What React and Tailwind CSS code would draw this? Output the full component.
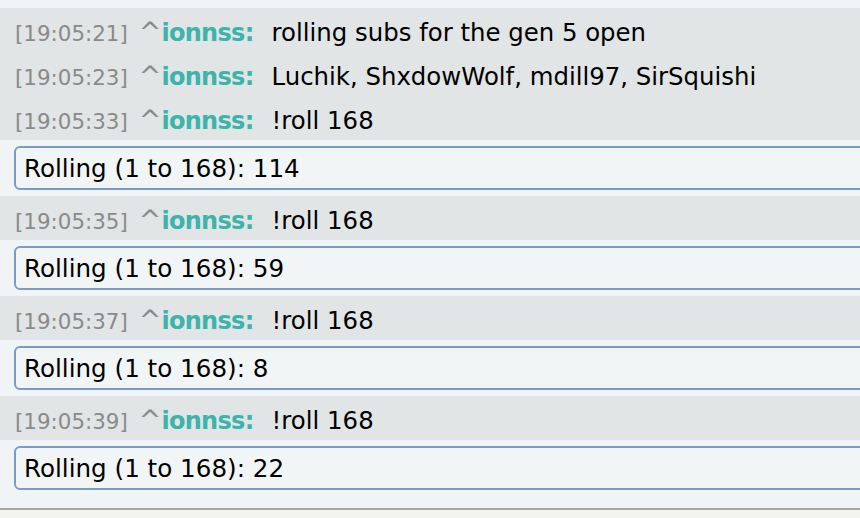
const LINES = [
  { type: "chat", time: "19:05:21", user: "ionnss", text: "rolling subs for the gen 5 open" },
  { type: "chat", time: "19:05:23", user: "ionnss", text: "Luchik, ShxdowWolf, mdill97, SirSquishi" },
  { type: "chat", time: "19:05:33", user: "ionnss", text: "!roll 168" },
  { type: "roll", text: "Rolling (1 to 168): 114" },
  { type: "chat", time: "19:05:35", user: "ionnss", text: "!roll 168" },
  { type: "roll", text: "Rolling (1 to 168): 59" },
  { type: "chat", time: "19:05:37", user: "ionnss", text: "!roll 168" },
  { type: "roll", text: "Rolling (1 to 168): 8" },
  { type: "chat", time: "19:05:39", user: "ionnss", text: "!roll 168" },
  { type: "roll", text: "Rolling (1 to 168): 22" },
];

function ChatLine({ time, user, text }) {
  return (
    <div className="flex h-[44px] items-baseline whitespace-nowrap bg-[#e1e5e6] pl-[15px] pt-[10px] pb-[6px] leading-[28px]">
      <span className="text-[21.4px] text-[#8a8a8a]">[{time}]</span>
      <span className="ml-[11px] text-[27px] leading-[28px] text-[#8a8a8a]">^</span>
      <span className="text-[24px] font-bold tracking-[-0.7px] text-[#3cb4aa]">{user}:</span>
      <span className="ml-[18px] text-[24.4px] text-black">{text}</span>
    </div>
  );
}

function RollBox({ text }) {
  return (
    <div className="overflow-hidden py-[6px] pl-[14px]">
      <div className="h-[44px] w-[880px] whitespace-nowrap rounded-[6px] border-2 border-[#7a9cc0] bg-[#f1f5f6] pl-[8px] pt-[7px] pb-[5px] text-[24.6px] leading-[28px] text-black">
        {text}
      </div>
    </div>
  );
}

export default function App() {
  return (
    <div className="h-[518px] w-[860px] overflow-hidden bg-[#f3f4ef] font-['DejaVu_Sans','Verdana',sans-serif]">
      <div className="border-b-2 border-[#a6a6a6] bg-[#f0f4f6] pt-[8px] pb-[12px]">
        {LINES.map((line, i) =>
          line.type === "chat" ? (
            <ChatLine key={i} time={line.time} user={line.user} text={line.text} />
          ) : (
            <RollBox key={i} text={line.text} />
          )
        )}
      </div>
    </div>
  );
}
